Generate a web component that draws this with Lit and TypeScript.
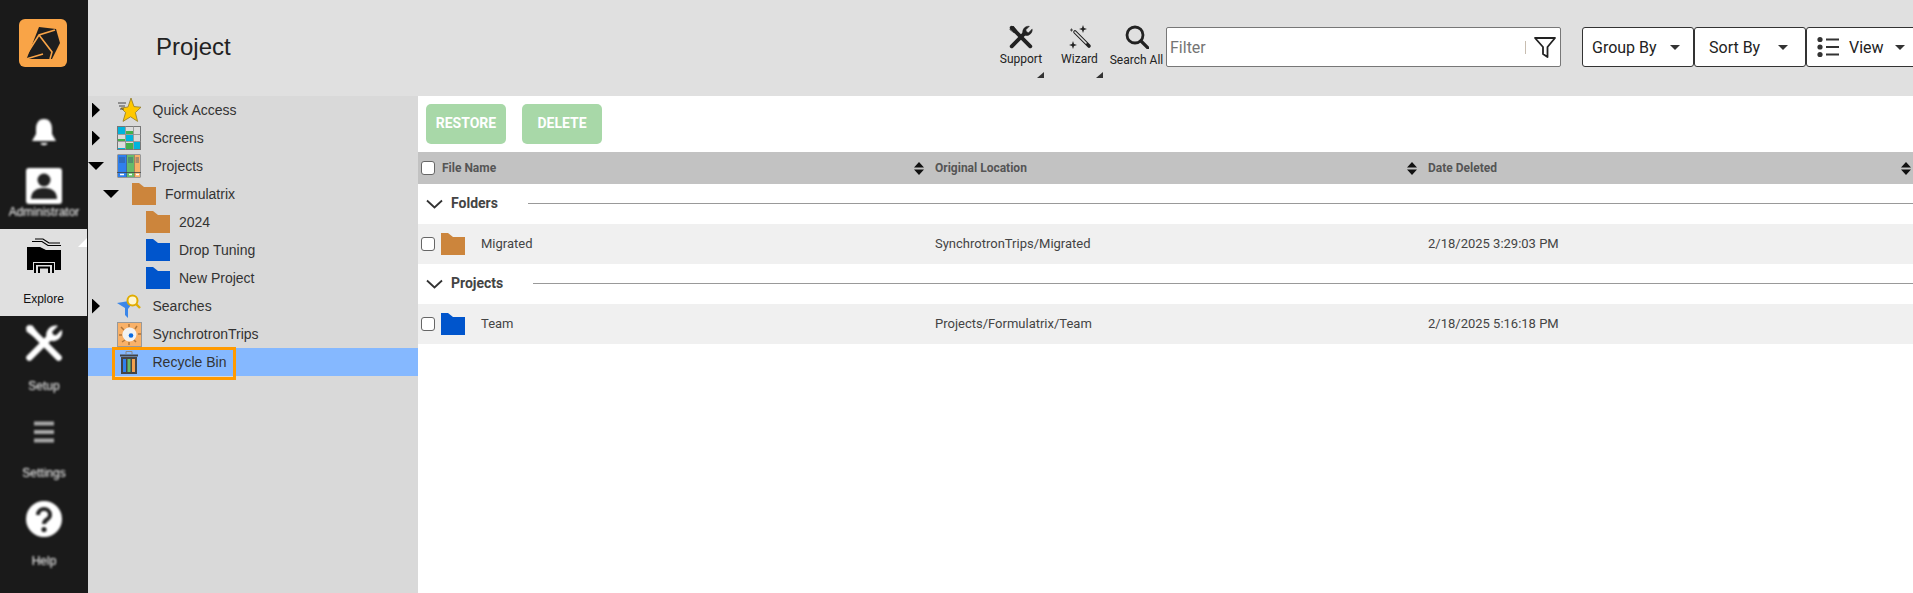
import { LitElement, html, css, svg } from "lit";
import { customElement } from "lit/decorators.js";

const wrench = (c: string) => svg`<g stroke=${c} fill="none" stroke-linecap="round">
  <path d="M3.5 3.5 L6 6 L20.5 20.5" stroke-width="3.6"/>
  <path d="M2 5 L5 2 L8 6 L6 8 Z" fill=${c} stroke-width="0.6"/>
  <path d="M3.5 20.5 L15.5 8.5" stroke-width="3.6"/>
  <path d="M14 9.5 C12.6 6 15 1.8 19.6 2.2 L16.4 5.4 L17 7.4 L19 8 L22.2 4.8 C22.6 9.2 18.4 11.6 15 10.2 Z" fill=${c} stroke=${c} stroke-width="0.6" stroke-linejoin="round"/>
</g>`;

const folder = (color: string) => html`<svg class="folder" viewBox="0 0 24 22"><path fill=${color} d="M0 0 H7 L12 4 H24 V22 H0 Z"/></svg>`;
const ORANGE = "#cc853c";
const BLUE = "#0055cc";

const star = svg`<path d="M14 0 L17 8.6 L24 9.2 L18.4 14.6 L20.6 23.4 L13.6 18.8 L6 23.4 L8.6 14.6 L4 10 L11 9 Z" fill="#ffc800" stroke="#8f7a2a" stroke-width=".8"/><path d="M1 5h8M2 8h6M3 11h4" stroke="#444" stroke-width="1" fill="none"/>`;
const screens = svg`<rect x=".5" y=".5" width="23" height="23" fill="#dcdcdc" stroke="#777"/>
  <rect x="1" y="1" width="7" height="7" fill="#00b4dc"/><rect x="9" y="5" width="7" height="3" fill="#44b04a"/><rect x="9" y="9" width="7" height="6" fill="#00b4dc"/>
  <rect x="1" y="13" width="7" height="2" fill="#44b04a"/><rect x="9" y="17" width="7" height="6" fill="#44b04a"/><rect x="17" y="16" width="6" height="7" fill="#00b4dc"/>
  <rect x="1" y="22" width="7" height="1" fill="#00b4dc"/>
  <path d="M8.5 0V24M16.5 0V24M0 8.5H24M0 15.5H24" stroke="#8a8a8a" stroke-width=".8"/>`;
const books = svg`<rect x=".5" y=".5" width="23" height="23" fill="#555"/>
  <rect x="1" y="1" width="8.5" height="22" fill="#2f80ed"/><rect x="10" y="1" width="7" height="22" fill="#66bb6a"/><rect x="17.5" y="1" width="5.5" height="22" fill="#f9b168"/>
  <path d="M2 4h6M2 6h6M2 8h6M11 4h5M11 6h5M11 8h5M18.5 4h3.5M18.5 6h3.5M18.5 8h3.5" stroke="#33507a" stroke-width=".8"/>
  <path d="M0 18.5H24" stroke="#444" stroke-width=".8"/><path d="M3 20.5h4M12 20.5h3M19 20.5h3" stroke="#fff" stroke-width="1.3"/>`;
const searches = svg`<path d="M0 9 L12 7 L14 11 L11 15 V24 L8 21 V14 Z" fill="#3b86e8"/><circle cx="15.5" cy="6.5" r="5" fill="#fff6d0" stroke="#e0ac00" stroke-width="2"/><path d="M19 10 L23 14" stroke="#e0ac00" stroke-width="2.4"/>`;
const synchro = svg`<rect x=".5" y=".5" width="24" height="24" fill="#f9b168" stroke="#999"/><circle cx="12.5" cy="12.5" r="7" fill="#f2f2f2"/><circle cx="14" cy="13.5" r="2.3" fill="#0a6ae0"/>
  <path d="M12 2v3M4 5l3 3M20 4l-2 3M2 13h3M21 12h3M5 20l3-2M19 20l-2-2M12 20v3" stroke="#b0763a" stroke-width="1.5"/>`;
const trash = svg`<g transform="translate(3 0)"><path d="M0 5.5H18" stroke="#444" stroke-width="2"/><path d="M6 4V1.5H12V4" stroke="#888" stroke-width="1" fill="none"/><rect x="1" y="7" width="16" height="17" fill="#444"/>
  <rect x="3" y="9" width="3" height="13" fill="#2f80ed"/><rect x="7.5" y="9" width="3" height="13" fill="#66bb6a"/><rect x="12" y="9" width="3" height="13" fill="#f2a04e"/></g>`;

const sortIcon = html`<svg class="sort" viewBox="0 0 10 13"><path d="M5 0 L10 5.5 H0 Z M5 13 L0 7.5 H10 Z" fill="#111"/></svg>`;
const chevron = html`<svg class="chev" viewBox="0 0 17 10"><path d="M1 1.5 L8.5 8.5 L16 1.5" fill="none" stroke="#333" stroke-width="1.8"/></svg>`;
const caret = (cls: string) => html`<span class="caret ${cls}"></span>`;

@customElement("app-root")
export class AppRoot extends LitElement {
  static styles = css`
    :host { display: block; height: 100vh; overflow: hidden; font-family: Roboto, "Liberation Sans", sans-serif; }
    * { box-sizing: border-box; }
    .page { display: flex; height: 593px; width: 1913px; overflow: hidden; }

    .side { width: 88px; flex: none; background: #1a1a1a; display: flex; flex-direction: column; color: #fff; }
    .logo-wrap { height: 110px; padding: 19px 0 0 19px; flex: none; }
    .logo { display: block; width: 48px; height: 48px; }
    .nav { display: flex; flex-direction: column; align-items: center; flex: none; width: 88px; }
    .nav svg { filter: blur(1.2px); }
    .nav span.blur { filter: blur(1.1px); color: #fff; font-size: 12px; }
    .nav span { font: 11px "Liberation Sans", sans-serif; line-height: 14px; }
    .nav-bell { height: 48px; padding-top: 7px; }
    .nav-bell svg { width: 32px; height: 32px; }
    .nav-admin { height: 71px; padding-top: 10px; }
    .nav-admin svg { width: 36px; height: 36px; }
    .nav-admin span { margin-top: 1px; }
    .nav-explore { height: 87px; padding-top: 9px; width: 87px; background: #e0e0e0; position: relative; }
    .nav-explore svg { width: 36px; height: 36px; filter: none; }
    .nav-explore span { margin-top: 18px; font-size: 12px; color: #111; }
    .corner { position: absolute; right: 0; top: -9px; width: 9px; height: 9px; background: #fff; clip-path: polygon(100% 0, 100% 100%, 0 100%); }
    .nav-setup { height: 86px; padding-top: 8px; }
    .nav-setup svg { width: 38px; height: 38px; }
    .nav-setup span { margin-top: 17px; }
    .nav-settings { height: 88px; padding-top: 18px; }
    .nav-settings svg { width: 24px; height: 24px; }
    .nav-settings span { margin-top: 22px; }
    .nav-help { height: 88px; padding-top: 10px; }
    .nav-help svg { width: 38px; height: 38px; }
    .nav-help span { margin-top: 16px; }

    .content { flex: 1; display: flex; flex-direction: column; min-width: 0; }
    .top { height: 96px; flex: none; background: #e0e0e0; display: flex; }
    .title { flex: 0 0 902px; padding: 33px 0 0 68px; font-size: 24px; line-height: 28px; color: #222; font-family: "Liberation Sans", sans-serif; }
    .tool { position: relative; display: flex; flex-direction: column; align-items: center; padding-top: 25px; flex: none; font-size: 12px; color: #222; }
    .tool svg.ic { width: 24px; height: 24px; display: block; }
    .tool span.lbl { margin-top: 3px; line-height: 14px; white-space: nowrap; }
    .t-support { width: 62px; }
    .t-wizard { width: 55px; }
    .t-search { width: 59px; }
    .t-search span.lbl { margin-top: 4px; }
    .corner-tri { position: absolute; bottom: 18px; width: 7px; height: 6px; background: #333; clip-path: polygon(100% 0, 100% 100%, 0 100%); }
    .t-support .corner-tri { right: 8px; }
    .t-wizard .corner-tri { right: 4px; }

    .filter { margin-top: 27px; width: 395px; height: 40px; flex: none; background: #fff; border: 1px solid #777; border-radius: 2px; display: flex; align-items: center; padding-left: 3px; font-size: 16px; color: #757575; }
    .filter .ph { flex: 1; }
    .filter .sep { width: 1px; height: 13px; background: #c8bdb0; margin-right: 7px; }
    .filter svg { width: 24px; height: 24px; margin-right: 3px; }
    .ctrls { display: flex; margin-left: 21px; margin-top: 27px; flex: none; }
    .btn { height: 40px; width: 112px; flex: none; background: #fff; border: 1px solid #333; border-radius: 3px; display: flex; align-items: center; font-size: 16px; color: #222; }
    .btn .caret { margin-left: auto; }
    .b-group { padding-left: 9px; }
    .b-sort { padding-left: 14px; }
    .b-view { padding-left: 10px; }
    .b-view svg { width: 22px; height: 22px; margin-right: 10px; }
    .caret { width: 0; height: 0; border-left: 5px solid transparent; border-right: 5px solid transparent; border-top: 5px solid #333; }
    .c-group { margin-right: 13px; }
    .c-sort { margin-right: 17px; }
    .c-view { margin-right: 12px; }

    .body { flex: 1; display: flex; min-height: 0; }
    .tree { width: 330px; flex: none; background: #d9d9d9; font: 14px/28px "Liberation Sans", sans-serif; color: #333; }
    .row { position: relative; height: 28px; display: flex; align-items: center; }
    .l1 { padding-left: 15px; }
    .l2 { padding-left: 29px; }
    .arrow { width: 29px; height: 28px; flex: none; display: flex; align-items: center; }
    .arrow-r { width: 8px; height: 15px; margin-left: 4px; background: #000; clip-path: polygon(0 0, 100% 50%, 0 100%); }
    .arrow-d { width: 16px; height: 8px; background: #000; clip-path: polygon(0 0, 100% 0, 50% 100%); }
    .ticon { width: 24px; height: 24px; flex: none; margin-right: 11.5px; display: block; overflow: visible; }
    .tree .folder { width: 24px; height: 22px; flex: none; margin-right: 9px; display: block; }
    .sel { background: #85b8ff; }
    .outline { position: absolute; left: 24px; top: -1px; width: 124px; height: 33px; border: 3px solid #ff9a00; }

    .main { flex: 1; background: #fff; min-width: 0; }
    .toolbar { height: 56px; padding: 8px; display: flex; gap: 16px; }
    .act { width: 80px; height: 40px; padding-bottom: 2px; border-radius: 5px; background: #a8d8a8; color: #fff; font-size: 14px; font-weight: 700; display: flex; align-items: center; justify-content: center; }
    .thead, .trow { display: grid; grid-template-columns: 517px 493px 1fr; align-items: center; }
    .thead { height: 32px; background: #c2c2c2; font-size: 12px; font-weight: 700; color: #555; }
    .th { display: flex; align-items: center; padding-right: 11px; }
    .th:last-child { padding-right: 2px; }
    .sort { width: 10px; height: 13px; margin-left: auto; }
    .cb { appearance: none; width: 14px; height: 14px; margin: 0 7px 0 3px; background: #fff; border: 1px solid #666; border-radius: 3px; flex: none; }
    .group { height: 40px; padding: 0 0 2px 8px; display: flex; align-items: center; font-size: 14px; font-weight: 700; color: #444; }
    .chev { width: 17px; height: 10px; margin-right: 8px; margin-top: 2px; }
    .rule { flex: 1; height: 1px; background: #999; margin-left: 30px; margin-top: 1px; }
    .trow { height: 40px; padding-bottom: 1px; background: #f0f0f0; font-size: 13px; color: #444; }
    .name { display: flex; align-items: center; }
    .name .folder { width: 24px; height: 22px; margin-right: 16px; display: block; }
    .name .cb { margin-right: 6px; }
  `;

  private treeRow(level: string, arrow: string, icon: unknown, label: string) {
    return html`<div class="row ${level}">
      <span class="arrow">${arrow ? html`<span class="arrow-${arrow}"></span>` : ""}</span>
      ${icon}<span>${label}</span>
    </div>`;
  }

  private ti(content: unknown) {
    return html`<svg class="ticon" viewBox="0 0 24 24">${content}</svg>`;
  }

  render() {
    return html`<div class="page">
      <aside class="side">
        <div class="logo-wrap">
          <svg class="logo" viewBox="0 0 48 48">
            <rect width="48" height="48" rx="6" fill="#f9a447"/>
            <path d="M20 8 L37 10 L41 24 L33 40 L7.5 40 Z" fill="#1e1e1e"/>
            <path d="M6 38 L20 16 L36 11 M20 16 L33 33 L31 40 M7 40 L24 35" stroke="#f9a447" stroke-width="1.6" fill="none"/>
          </svg>
        </div>
        <div class="nav nav-bell">
          <svg viewBox="0 0 32 32"><path d="M16 2 C10 2 8 7 8 12 V17 L4 24 H28 L24 17 V12 C24 7 22 2 16 2 Z M12.5 26 H19.5 C19 29 13 29 12.5 26 Z" fill="#fff"/></svg>
        </div>
        <div class="nav nav-admin">
          <svg viewBox="0 0 36 36"><rect width="36" height="36" rx="3" fill="#fff"/><circle cx="18" cy="12" r="6.5" fill="#222"/><path d="M5 31 C5 22 12 20 18 20 C24 20 31 22 31 31 Z" fill="#222"/></svg>
          <span class="blur">Administrator</span>
        </div>
        <div class="nav nav-explore">
          <span class="corner"></span>
          <svg viewBox="0 0 36 36">
            <path d="M9 1 H17 L23 5 H34 M6 3.5 H16 L22 7.5 H35" stroke="#000" stroke-width="1.2" fill="none"/>
            <path d="M1 9 H14 L20 12 H35 V32 H29 V24 H7 V32 H1 Z" fill="#000"/>
            <path d="M9 35 V26 H27 V35 M13 35 V29.5 H23 V35" stroke="#000" stroke-width="2" fill="none"/>
          </svg>
          <span>Explore</span>
        </div>
        <div class="nav nav-setup">
          <svg viewBox="1 1 22 22">${wrench("#fff")}</svg>
          <span class="blur">Setup</span>
        </div>
        <div class="nav nav-settings">
          <svg viewBox="0 0 24 24"><path d="M2 3.5H22M2 12H22M2 20.5H22" stroke="#aaa" stroke-width="4"/></svg>
          <span class="blur">Settings</span>
        </div>
        <div class="nav nav-help">
          <svg viewBox="0 0 38 38"><circle cx="19" cy="19" r="18" fill="#fff"/><path d="M13 15 C13 7 25 7 25 15 C25 20 19 19 19 24" stroke="#222" stroke-width="4" fill="none"/><circle cx="19" cy="29.5" r="2.6" fill="#222"/></svg>
          <span class="blur">Help</span>
        </div>
      </aside>

      <div class="content">
        <header class="top">
          <div class="title">Project</div>
          <div class="tool t-support">
            <svg class="ic" viewBox="1 1 22 22">${wrench("#222")}</svg>
            <span class="lbl">Support</span><span class="corner-tri"></span>
          </div>
          <div class="tool t-wizard">
            <svg class="ic" viewBox="0 0 24 24">
              <path d="M7 7 L21 21" stroke="#222" stroke-width="3.6" stroke-linecap="round"/>
              <path d="M7 7 L18 18" stroke="#e0e0e0" stroke-width="1.6" stroke-linecap="round"/>
              <path d="M15 0 L16 3 L19 4 L16 5 L15 8 L14 5 L11 4 L14 3 Z M5 16 L6 19 L9 20 L6 21 L5 24 L4 21 L1 20 L4 19 Z" fill="#222"/>
              <path d="M2 5h3M3.5 3.5v3" stroke="#444" stroke-width="1"/>
            </svg>
            <span class="lbl">Wizard</span><span class="corner-tri"></span>
          </div>
          <div class="tool t-search">
            <svg class="ic" viewBox="0 0 24 24"><circle cx="10" cy="10" r="8" fill="none" stroke="#222" stroke-width="2.8"/><path d="M16 16 L23 23" stroke="#222" stroke-width="3.2" stroke-linecap="round"/></svg>
            <span class="lbl">Search All</span>
          </div>
          <div class="filter">
            <span class="ph">Filter</span><span class="sep"></span>
            <svg viewBox="0 0 24 24"><path d="M2 3 H22 L14.5 12 V22 L10 19 V12 Z" fill="none" stroke="#222" stroke-width="1.8" stroke-linejoin="round"/></svg>
          </div>
          <div class="ctrls">
            <div class="btn b-group"><span>Group By</span>${caret("c-group")}</div>
            <div class="btn b-sort"><span>Sort By</span>${caret("c-sort")}</div>
            <div class="btn b-view">
              <svg viewBox="0 0 22 22"><circle cx="3" cy="3.5" r="2.6" fill="#333"/><circle cx="3" cy="11" r="2.6" fill="#333"/><circle cx="3" cy="18.5" r="2.6" fill="#333"/><path d="M9 3.5H22M9 11H22M9 18.5H22" stroke="#333" stroke-width="2.2"/></svg>
              <span>View</span>${caret("c-view")}
            </div>
          </div>
        </header>

        <div class="body">
          <nav class="tree">
            ${this.treeRow("", "r", this.ti(star), "Quick Access")}
            ${this.treeRow("", "r", this.ti(screens), "Screens")}
            ${this.treeRow("", "d", this.ti(books), "Projects")}
            ${this.treeRow("l1", "d", folder(ORANGE), "Formulatrix")}
            ${this.treeRow("l2", "", folder(ORANGE), "2024")}
            ${this.treeRow("l2", "", folder(BLUE), "Drop Tuning")}
            ${this.treeRow("l2", "", folder(BLUE), "New Project")}
            ${this.treeRow("", "r", this.ti(searches), "Searches")}
            ${this.treeRow("", "", this.ti(synchro), "SynchrotronTrips")}
            <div class="row sel">
              <span class="arrow"></span>
              ${this.ti(trash)}<span>Recycle Bin</span>
              <span class="outline"></span>
            </div>
          </nav>

          <main class="main">
            <div class="toolbar">
              <div class="act">RESTORE</div>
              <div class="act">DELETE</div>
            </div>
            <div class="thead">
              <div class="th"><input class="cb" type="checkbox" /><span>File Name</span>${sortIcon}</div>
              <div class="th"><span>Original Location</span>${sortIcon}</div>
              <div class="th"><span>Date Deleted</span>${sortIcon}</div>
            </div>
            <div class="group">${chevron}<span>Folders</span><span class="rule"></span></div>
            <div class="trow">
              <div class="name"><input class="cb" type="checkbox" />${folder(ORANGE)}<span>Migrated</span></div>
              <div>SynchrotronTrips/Migrated</div>
              <div>2/18/2025 3:29:03 PM</div>
            </div>
            <div class="group">${chevron}<span>Projects</span><span class="rule"></span></div>
            <div class="trow">
              <div class="name"><input class="cb" type="checkbox" />${folder(BLUE)}<span>Team</span></div>
              <div>Projects/Formulatrix/Team</div>
              <div>2/18/2025 5:16:18 PM</div>
            </div>
          </main>
        </div>
      </div>
    </div>`;
  }
}
